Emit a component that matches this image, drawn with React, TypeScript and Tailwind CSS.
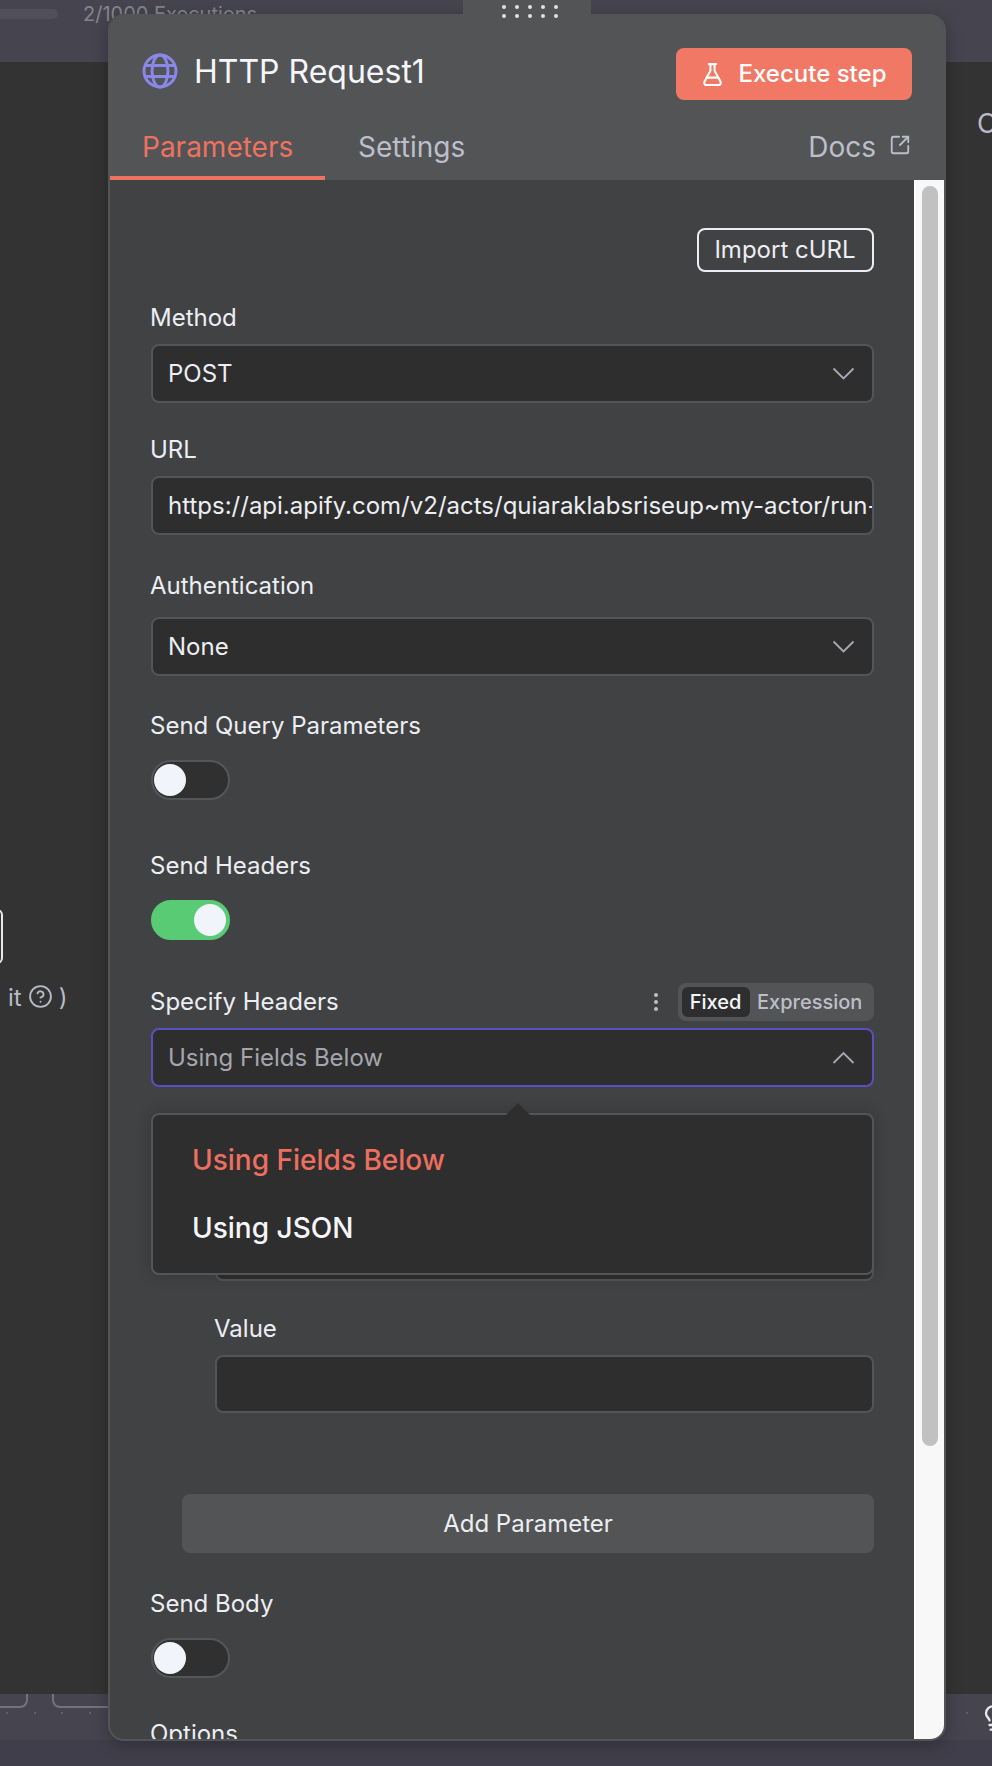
import { CircleHelp, FlaskConical, Lightbulb, SquareArrowOutUpRight } from 'lucide-react';

const fieldBox = 'flex h-[59px] items-center rounded-[8px] border-2 border-[#545557] bg-[#2e2e2e] pl-[15px] pr-[17px] text-[24px] text-[#eceef3]';

function FieldLabel({ text, className = '' }: { text: string; className?: string }) {
    return <div className={`-ml-[1px] h-[24px] text-[24px] leading-[24px] text-[#eceef3] ${className}`}>{text}</div>;
}

function Chevron({ up = false }: { up?: boolean }) {
    return (
        <svg width="23" height="13" viewBox="0 0 23 13" fill="none" stroke="#a8a9b5" strokeWidth="1.8">
            <path d={up ? 'M1.5 12L11.5 2l10 10' : 'M1.5 1.5l10 10 10-10'} />
        </svg>
    );
}

function SelectField({ value, className = '' }: { value: string; className?: string }) {
    return (
        <div className={`${fieldBox} justify-between ${className}`}>
            <span>{value}</span>
            <Chevron />
        </div>
    );
}

function Toggle({ on = false, className = '' }: { on?: boolean; className?: string }) {
    return (
        <div
            className={`flex h-[40px] w-[79px] items-center rounded-full border-2 px-[1px] ${
                on ? 'justify-end border-[#5acb75] bg-[#5acb75] pr-[2px]' : 'justify-start border-[#555658] bg-[#303030]'
            } ${className}`}
        >
            <div className="h-[32px] w-[32px] rounded-full bg-[#f1f4fb]" />
        </div>
    );
}

function GripDots() {
    return (
        <div className="grid grid-cols-5 gap-x-[9px] gap-y-[5px]">
            {Array.from({ length: 10 }).map((_, i) => (
                <div key={i} className="h-[4px] w-[4px] rounded-full bg-[#dfe0e4]" />
            ))}
        </div>
    );
}

function CanvasDots({ className }: { className: string }) {
    return (
        <div className={`absolute flex gap-[25.5px] ${className}`}>
            {[0, 1, 2, 3].map((i) => (
                <div key={i} className="h-[2px] w-[2px] bg-[#5f5e69]" />
            ))}
        </div>
    );
}

export default function App() {
    return (
        <div className="relative flex h-[1766px] w-[992px] flex-col overflow-hidden bg-[#333333] font-['Inter',sans-serif]">
            {/* page behind the panel */}
            <div className="flex h-[62px] items-start bg-[#45444f]">
                <div className="mt-[9px] h-[10px] w-[58px] rounded-r-full bg-[#504f5a]" />
                <div className="ml-[25px] mt-[2px] text-[20px] leading-[24px] text-[#85848e]">2/1000 Executions</div>
            </div>
            <div className="flex-1 bg-[#333333]" />
            <div className="h-[46px] bg-[#45444f]" />
            <div className="h-[26px] bg-[#403e4a]" />

            {/* bits of the canvas peeking out */}
            <div className="absolute left-[-20px] top-[909px] h-[55px] w-[23px] rounded-[6px] border-2 border-[#e8e9ee]" />
            <div className="absolute left-[8px] top-[984px] flex items-center gap-[6px] text-[24px] leading-[28px] text-[#b9bbc5]">
                <span>it</span>
                <CircleHelp size={25} strokeWidth={1.8} className="-mt-[4px]" />
                <span>)</span>
            </div>
            <div className="absolute left-[977px] top-[108px] text-[27px] leading-[32px] text-[#b9bbc5]">O</div>
            <div className="absolute left-[-20px] top-[1694px] h-[14px] w-[48px] rounded-b-[8px] border-2 border-t-0 border-[#73727d]" />
            <div className="absolute left-[52px] top-[1694px] h-[14px] w-[80px] rounded-b-[8px] border-2 border-t-0 border-[#73727d]" />
            <CanvasDots className="left-[6px] top-[1712px]" />
            <div className="absolute left-[966px] top-[1712px] h-[2px] w-[2px] bg-[#5f5e69]" />
            <Lightbulb size={28} strokeWidth={2} className="absolute left-[979px] top-[1704px] text-[#e8e9ee]" />

            {/* node settings panel */}
            <div className="absolute left-[108px] top-[14px] flex h-[1727px] w-[838px] flex-col overflow-hidden rounded-[16px] border-b-2 border-l-2 border-r-2 border-[#535456] bg-[#414244] shadow-[0_4px_16px_rgba(0,0,0,0.25)]">
                <div className="h-[166px] shrink-0 bg-[#535456]">
                    <div className="flex h-[120px] items-start justify-between pl-[32px] pr-[32px]">
                        <div className="mt-[38px] flex items-center gap-[16px]">
                            <svg width="36" height="36" viewBox="0 0 36 36" fill="none" stroke="#8b87ea" strokeWidth="3">
                                <circle cx="18" cy="18" r="16" />
                                <ellipse cx="18" cy="18" rx="8" ry="16" />
                                <path d="M3.5 12.5h29M3.5 23.5h29" />
                            </svg>
                            <span className="mt-[2px] text-[32px] leading-[36px] text-[#f5f6fa]">HTTP Request1</span>
                        </div>
                        <div className="mt-[34px] flex h-[52px] w-[236px] items-center justify-center gap-[14px] rounded-[8px] bg-[#f07864] pr-[2px] text-[24px] font-medium text-white">
                            <FlaskConical size={25} strokeWidth={2} />
                            <span>Execute step</span>
                        </div>
                    </div>
                    <div className="flex h-[46px] items-start justify-between pr-[33px]">
                        <div className="flex">
                            <div className="h-[46px] w-[215px] border-b-[4px] border-[#ee7260] pl-[32px] text-[28px] leading-[26px] text-[#ee7260]">Parameters</div>
                            <div className="pl-[33px] text-[28px] leading-[26px] text-[#bcbfca]">Settings</div>
                        </div>
                        <div className="flex items-center gap-[13px] text-[28px] leading-[26px] text-[#bcbfca]">
                            <span>Docs</span>
                            <SquareArrowOutUpRight size={22} strokeWidth={2} className="-mt-[5px]" />
                        </div>
                    </div>
                </div>

                <div className="flex min-h-0 flex-1">
                    <div className="relative min-w-0 flex-1 pl-[41px] pr-[40px] pt-[48px]">
                        <div className="flex justify-end">
                            <div className="flex h-[44px] w-[177px] items-center justify-center rounded-[8px] border-2 border-[#eceef3] pr-[1px] text-[24px] text-[#eceef3]">Import cURL</div>
                        </div>

                        <FieldLabel text="Method" className="mt-[34px]" />
                        <SelectField value="POST" className="mt-[14px]" />

                        <FieldLabel text="URL" className="mt-[35px]" />
                        <div className={`${fieldBox} mt-[14px] overflow-hidden whitespace-nowrap !pr-0`}>
                            https://api.apify.com/v2/acts/quiaraklabsriseup~my-actor/run-sync
                        </div>

                        <FieldLabel text="Authentication" className="mt-[39px]" />
                        <SelectField value="None" className="mt-[19px]" />

                        <FieldLabel text="Send Query Parameters" className="mt-[38px]" />
                        <Toggle className="mt-[22px]" />

                        <FieldLabel text="Send Headers" className="mt-[54px]" />
                        <Toggle on className="mt-[22px]" />

                        <div className="mt-[43px] flex h-[38px] items-center justify-between">
                            <div className="-ml-[1px] text-[24px] leading-[24px] text-[#eceef3]">Specify Headers</div>
                            <div className="flex items-center gap-[20px]">
                                <div className="flex flex-col gap-[3px]">
                                    <div className="h-[4px] w-[4px] rounded-full bg-[#bcbfca]" />
                                    <div className="h-[4px] w-[4px] rounded-full bg-[#bcbfca]" />
                                    <div className="h-[4px] w-[4px] rounded-full bg-[#bcbfca]" />
                                </div>
                                <div className="flex h-[38px] w-[196px] items-center rounded-[8px] bg-[#535456] pl-[4px] text-[20px] font-medium">
                                    <div className="flex h-[30px] w-[68px] items-center justify-center rounded-[6px] bg-[#2e2e2e] pr-[1px] text-[#f5f6fa]">Fixed</div>
                                    <div className="ml-[7px] text-[#bcbfca]">Expression</div>
                                </div>
                            </div>
                        </div>

                        <div className="mt-[7px] flex h-[59px] items-center justify-between rounded-[8px] border-2 border-[#5a4fc0] bg-[#2e2e2e] pl-[15px] pr-[17px] text-[24px] text-[#a5a6ad]">
                            <span>Using Fields Below</span>
                            <Chevron up />
                        </div>

                        <div className="ml-[64px]">
                            <div className="mt-[134px] h-[60px] rounded-[8px] border-2 border-[#545557] bg-[#2e2e2e]" />
                            <FieldLabel text="Value" className="mt-[36px]" />
                            <div className={`${fieldBox} mt-[14px] !h-[58px]`} />
                        </div>

                        <div className="ml-[31px] mt-[81px] flex h-[59px] items-center justify-center rounded-[8px] bg-[#535456] text-[24px] text-[#eceef3]">Add Parameter</div>

                        <FieldLabel text="Send Body" className="mt-[39px]" />
                        <Toggle className="mt-[22px]" />

                        <FieldLabel text="Options" className="mt-[44px]" />

                        {/* open dropdown */}
                        <div className="absolute left-[41px] right-[40px] top-[933px] h-[162px] rounded-[8px] border-2 border-[#545557] bg-[#2e2e2e] pl-[39px] pt-[27px] shadow-[0_0_16px_rgba(0,0,0,0.2)]">
                            <div className="h-[68px] text-[28px] leading-[36px] font-medium text-[#ec6f5f]">Using Fields Below</div>
                            <div className="text-[28px] leading-[36px] font-medium text-[#f5f6fa]">Using JSON</div>
                            <svg width="24" height="12" viewBox="0 0 24 12" className="absolute left-[353px] top-[-12px]">
                                <path d="M12 0L24 12H0z" fill="#2e2e2e" />
                            </svg>
                        </div>
                    </div>

                    <div className="w-[30px] shrink-0 border-l-2 border-white bg-[#f8f8f8] pl-[6px] pr-[6px] pt-[6px]">
                        <div className="h-[1260px] w-[16px] rounded-full bg-[#c1c1c1]" />
                    </div>
                </div>
            </div>
            <div className="absolute left-[463px] top-0 flex h-[14px] w-[128px] justify-center bg-[#535456]" />
            <div className="absolute left-[502px] top-[5px]">
                <GripDots />
            </div>
        </div>
    );
}
